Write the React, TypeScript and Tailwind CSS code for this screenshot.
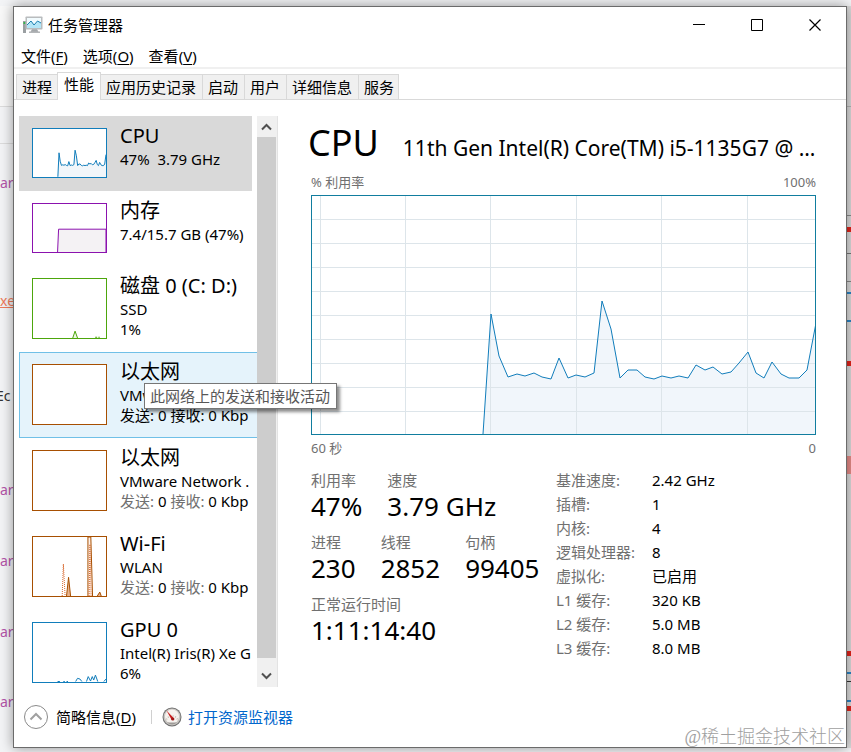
import type { ReactNode } from "react";

const CPU_LINE =
  "172,239 180,119 188,161 197,182 206,179 214,181 223,178 231,182 240,184 248,163 257,183 265,180 274,182 283,178 291,106 300,134 309,183 317,175 326,175 334,182 343,184 351,181 360,183 368,181 377,183 385,170 394,175 402,172 411,179 420,177 428,168 437,157 445,178 453,183 461,167 470,179 478,183 488,183 496,175 505,128";

const TABS = ["进程", "性能", "应用历史记录", "启动", "用户", "详细信息", "服务"];

const MENU = [
  { label: "文件", hotkey: "F" },
  { label: "选项", hotkey: "O" },
  { label: "查看", hotkey: "V" },
];

const SPECS = [
  ["基准速度:", "2.42 GHz"],
  ["插槽:", "1"],
  ["内核:", "4"],
  ["逻辑处理器:", "8"],
  ["虚拟化:", "已启用"],
  ["L1 缓存:", "320 KB"],
  ["L2 缓存:", "5.0 MB"],
  ["L3 缓存:", "8.0 MB"],
];

function TaskManagerIcon() {
  return (
    <svg width="20" height="18" viewBox="0 0 20 18" className="shrink-0">
      <rect x="0" y="5" width="3" height="12" fill="#9a9fa2" />
      <rect x="0.5" y="6" width="2" height="2" fill="#35b44a" />
      <path d="M9 13h5l1.500 3H7.500z" fill="#a3a7aa" />
      <rect x="6" y="15.500" width="11" height="1.500" fill="#b3b6b8" />
      <rect x="2.500" y="0.500" width="17" height="13" rx="0.800" fill="#b9bcbe" />
      <rect x="4" y="2" width="14" height="10" fill="#f2fbfe" />
      <path d="M4 9l4-4 3 4 3.500-4 3.500 2v5H4z" fill="#b4e6f7" />
      <path d="M4 9l4-4 3 4 3.500-4 3.500 2" fill="none" stroke="#1c7fb0" strokeWidth="1" />
    </svg>
  );
}

function GaugeIcon() {
  return (
    <svg width="20" height="20" viewBox="0 0 20 20" className="shrink-0">
      <circle cx="10" cy="10" r="9.500" fill="#6f6f6f" />
      <circle cx="10" cy="10" r="8.500" fill="#c9c6c2" />
      <circle cx="10" cy="9.500" r="7" fill="#f6f2ee" />
      <path d="M4.500 12.500a6 6 0 0 1 11 0" fill="none" stroke="#c4bcb4" strokeWidth="1.500" strokeDasharray="1 1.500" />
      <path d="M4.500 3.500l7.600 8-2.400 1.500z" fill="#c81e1e" />
      <circle cx="10.800" cy="12" r="1.600" fill="#a01818" />
      <path d="M5 15.500h10a8 8 0 0 1-10 0z" fill="#9d9a97" />
    </svg>
  );
}

function Thumb({ className, children }: { className: string; children?: ReactNode }) {
  return (
    <svg
      viewBox="0 0 505 240"
      preserveAspectRatio="none"
      className={`w-[75px] shrink-0 border bg-white ${className}`}
    >
      {children}
    </svg>
  );
}

function Resource({
  name,
  state = "border-transparent",
  short = false,
  thumb,
  children,
}: {
  name: string;
  state?: string;
  short?: boolean;
  thumb: ReactNode;
  children: ReactNode;
}) {
  return (
    <li>
      <button
        className={`flex w-full gap-[13px] overflow-hidden border border-r-0 pt-[6px] pl-3 text-left ${short ? "h-[75px]" : "h-[86px]"} ${state}`}
      >
        <span className="mt-[5px] flex shrink-0">{thumb}</span>
        <span className="block whitespace-nowrap">
          <span className="block text-[20px] leading-[26px]">{name}</span>
          {children}
        </span>
      </button>
    </li>
  );
}

function Traffic({ muted = true }: { muted?: boolean }) {
  const label = muted ? "text-[#707070]" : "";
  return (
    <span className="block leading-5">
      <span className={label}>发送:</span> 0 <span className={label}>接收:</span> 0 Kbp
    </span>
  );
}

function Stat({ label, value }: { label: string; value: string }) {
  return (
    <div>
      <dt className="leading-5 text-[#707070]">{label}</dt>
      <dd className="text-[26px] leading-8">{value}</dd>
    </div>
  );
}

function ResourceList() {
  return (
    <div className="relative flex h-[571px] w-[259px] shrink-0">
      <ul className="min-w-0 flex-1 overflow-hidden">
        <Resource
          name="CPU"
          short
          state="border-[#d9d9d9] bg-[#d9d9d9] w-[233px]!"
          thumb={
            <Thumb className="h-[50px] border-[#117dbb]">
              <polygon points={`${CPU_LINE} 505,240`} fill="#f1f6fa" />
              <polyline points={CPU_LINE} fill="none" stroke="#117dbb" vectorEffect="non-scaling-stroke" />
            </Thumb>
          }
        >
          <span className="block leading-5">47%&nbsp; 3.79 GHz</span>
        </Resource>
        <Resource
          name="内存"
          short
          thumb={
            <Thumb className="h-[50px] border-[#8b12ae]">
              <path d="M170 240L177 126H505V240" fill="#f4f2f4" stroke="#8b12ae" vectorEffect="non-scaling-stroke" />
            </Thumb>
          }
        >
          <span className="block leading-5">7.4/15.7 GB (47%)</span>
        </Resource>
        <Resource
          name="磁盘 0 (C: D:)"
          thumb={
            <Thumb className="h-[61px] border-[#4da60c]">
              <path
                d="M275 240L291 212L308 240M430 237h14M452 237h10"
                fill="#eff7e9"
                stroke="#4da60c"
                vectorEffect="non-scaling-stroke"
              />
            </Thumb>
          }
        >
          <span className="block leading-5">SSD</span>
          <span className="block leading-5">1%</span>
        </Resource>
        <Resource
          name="以太网"
          state="border-[#70c0e7] bg-[#e5f3fb]"
          thumb={<Thumb className="h-[61px] border-[#a74f01]" />}
        >
          <span className="block leading-5">VMware Network .</span>
          <Traffic muted={false} />
        </Resource>
        <Resource name="以太网" thumb={<Thumb className="h-[61px] border-[#a74f01]" />}>
          <span className="block leading-5">VMware Network .</span>
          <Traffic />
        </Resource>
        <Resource
          name="Wi-Fi"
          thumb={
            <Thumb className="h-[61px] border-[#a74f01]">
              <path d="M232 240L246 164L260 240" fill="#e9b48f" stroke="#a74f01" vectorEffect="non-scaling-stroke" />
              <path d="M380 240V0H400L412 240" fill="#fdf1e8" stroke="#a74f01" vectorEffect="non-scaling-stroke" />
              <path d="M445 240L462 224L472 240" fill="#e9b48f" stroke="#a74f01" vectorEffect="non-scaling-stroke" />
              <path
                d="M202 240L210 110L222 240M388 240L394 30L402 240"
                fill="none"
                stroke="#d9692f"
                strokeDasharray="1 1"
                vectorEffect="non-scaling-stroke"
              />
            </Thumb>
          }
        >
          <span className="block leading-5">WLAN</span>
          <Traffic />
        </Resource>
        <Resource
          name="GPU 0"
          thumb={
            <Thumb className="h-[61px] border-[#117dbb]">
              <path
                d="M170 238h16M210 238h10M232 238h10M295 238L308 225L325 228L338 238M370 238L382 218L398 236L410 218L420 232L432 212L448 238M490 238L505 228"
                fill="none"
                stroke="#117dbb"
                vectorEffect="non-scaling-stroke"
              />
            </Thumb>
          }
        >
          <span className="block leading-5">Intel(R) Iris(R) Xe G</span>
          <span className="block leading-5">6%</span>
        </Resource>
      </ul>

      {/* Scrollbar */}
      <div className="flex w-[21px] shrink-0 flex-col border-r border-[#e3e3e3] bg-[#f0f0f0] pr-px">
        <button aria-label="向上滚动" className="flex h-[21px] items-center justify-center">
          <svg width="11" height="8" viewBox="0 0 11 8" fill="none" stroke="#505050" strokeWidth="2">
            <path d="M1 6.500L5.500 2L10 6.500" />
          </svg>
        </button>
        <div className="flex-1 bg-[#cdcdcd]" />
        <button aria-label="向下滚动" className="flex h-[29px] items-center justify-center pt-[7px]">
          <svg width="11" height="8" viewBox="0 0 11 8" fill="none" stroke="#505050" strokeWidth="2">
            <path d="M1 1.500L5.500 6L10 1.500" />
          </svg>
        </button>
      </div>

      <div
        role="tooltip"
        className="absolute top-[267px] left-[125px] border border-[#767676] bg-white pr-[6px] pl-[5px] leading-6 whitespace-nowrap text-[#575757] shadow-[3px_3px_3px_rgba(0,0,0,0.45)]"
      >
        此网络上的发送和接收活动
      </div>
    </div>
  );
}

function CpuChart() {
  return (
    <div className="border border-[#117d9f]">
      <svg viewBox="1 1 503 238" preserveAspectRatio="none" className="block h-[238px] w-full">
        <polygon points={`${CPU_LINE} 505,240`} fill="#f1f6fb" />
        <g stroke="#dde5ea" shapeRendering="crispEdges">
          {[9, 94, 179, 265, 350, 436].map((x) => (
            <line key={x} x1={x + 0.5} x2={x + 0.5} y1="0" y2="240" />
          ))}
          {[24, 48, 72, 96, 120, 144, 168, 192, 216].map((y) => (
            <line key={y} x1="0" x2="505" y1={y + 0.5} y2={y + 0.5} />
          ))}
        </g>
        <polyline points={CPU_LINE} fill="none" stroke="#117dbb" vectorEffect="non-scaling-stroke" />
      </svg>
    </div>
  );
}

function CpuDetails() {
  return (
    <main className="min-w-0 flex-1 pr-[30px] pl-[33px]">
      <div className="flex items-baseline gap-6 pb-[2px]">
        <h1 className="-ml-[3px] text-[36px] leading-[54px]">CPU</h1>
        <p className="min-w-0 flex-1 truncate text-[21px]">11th Gen Intel(R) Core(TM) i5-1135G7 @ 2.40GHz</p>
      </div>
      <div className="flex justify-between text-[13px] leading-5 text-[#707070]">
        <span>% 利用率</span>
        <span>100%</span>
      </div>
      <div className="mt-[3px]">
        <CpuChart />
      </div>
      <div className="mt-[3px] flex justify-between text-[13px] leading-5 text-[#707070]">
        <span>60 秒</span>
        <span>0</span>
      </div>

      <div className="mt-[10px] flex">
        <dl className="flex w-[245px] shrink-0 flex-col gap-[10px] pt-[2px]">
          <div className="flex gap-[25px]">
            <Stat label="利用率" value="47%" />
            <Stat label="速度" value="3.79 GHz" />
          </div>
          <div className="flex gap-[25px]">
            <Stat label="进程" value="230" />
            <Stat label="线程" value="2852" />
            <Stat label="句柄" value="99405" />
          </div>
          <Stat label="正常运行时间" value="1:11:14:40" />
        </dl>
        <table className="self-start text-left">
          <tbody>
            {SPECS.map(([label, value]) => (
              <tr key={label} className="leading-6">
                <th scope="row" className="w-24 p-0 font-normal text-[#707070]">
                  {label}
                </th>
                <td className="p-0">{value}</td>
              </tr>
            ))}
          </tbody>
        </table>
      </div>
    </main>
  );
}

function Window() {
  return (
    <div className="relative z-10 flex min-w-0 flex-1 flex-col border border-[#6b6b6b] bg-white shadow-[0_0_12px_rgba(0,0,0,0.4)]">
      {/* Title bar */}
      <header className="flex h-9 items-center pr-[2px] pl-[9px]">
        <TaskManagerIcon />
        <span className="ml-[5px] flex-1">任务管理器</span>
        <button aria-label="最小化" className="flex h-full w-[58px] items-center justify-center">
          <svg width="12" height="12" viewBox="0 0 12 12" stroke="#000">
            <path d="M0 5.500h12" />
          </svg>
        </button>
        <button aria-label="最大化" className="flex h-full w-[58px] items-center justify-center">
          <svg width="12" height="12" viewBox="0 0 12 12" fill="none" stroke="#000">
            <path d="M.5.5h11v11H.5z" />
          </svg>
        </button>
        <button aria-label="关闭" className="flex h-full w-[58px] items-center justify-center">
          <svg width="12" height="12" viewBox="0 0 12 12" fill="none" stroke="#000" strokeWidth="1.200">
            <path d="M.5.5l11 11M11.500.5l-11 11" />
          </svg>
        </button>
      </header>

      {/* Menu */}
      <nav className="flex h-[26px] items-center gap-[15px] border-b-2 border-[#f0f0f0] pt-[3px] pl-[7px]">
        {MENU.map((m) => (
          <button key={m.label}>
            {m.label}(<u className="underline-offset-2">{m.hotkey}</u>)
          </button>
        ))}
      </nav>

      {/* Tabs */}
      <div role="tablist" className="flex h-[31px] items-end border-b border-[#d9d9d9] pl-[2px]">
        {TABS.map((tab) =>
          tab === "性能" ? (
            <button
              key={tab}
              role="tab"
              aria-selected="true"
              className="-mb-px -ml-px h-7 border border-b-0 border-[#d9d9d9] bg-white px-[6px] pb-1"
            >
              {tab}
            </button>
          ) : (
            <button
              key={tab}
              role="tab"
              aria-selected="false"
              className="h-[25px] border-t border-r border-[#d9d9d9] bg-[#f0f0f0] pr-[6px] pl-[5px] first:border-l first:pr-[5px] last:pr-1"
            >
              {tab}
            </button>
          )
        )}
      </div>

      <div className="flex pt-4 pl-[5px]">
        <ResourceList />
        <CpuDetails />
      </div>

      <footer className="flex h-[60px] items-center pl-[10px]">
        <button className="flex items-center gap-2">
          <svg width="24" height="24" viewBox="0 0 24 24" fill="none">
            <circle cx="12" cy="12" r="11.500" stroke="#8a8a8a" />
            <path d="M6.500 14.500L12 9l5.500 5.500" stroke="#a0a0a0" strokeWidth="2" />
          </svg>
          <span>
            简略信息(<u className="underline-offset-2">D</u>)
          </span>
        </button>
        <span className="mr-[10px] ml-[15px] h-3.5 w-px bg-[#d0d0d0]" />
        <a href="#resmon" className="flex items-center gap-[6px] text-[#0066cc]">
          <GaugeIcon />
          打开资源监视器
        </a>
      </footer>

      <span className="pointer-events-none absolute right-px bottom-0 font-['Liberation_Serif','Noto_Sans_CJK_SC',serif] text-[18px] leading-5 font-light text-[#a0a0a0]">
        @稀土掘金技术社区
      </span>
    </div>
  );
}

export default function App() {
  return (
    <div className="flex min-h-screen overflow-hidden bg-[#f3f4f6] pt-1.5 pb-1 font-['Noto_Sans','Noto_Sans_CJK_SC',sans-serif] text-[15px] text-black">
      {/* Editor showing behind the window */}
      <div className="w-[13px] shrink-0 overflow-hidden text-[14px] leading-5 text-[#b455a8]">
        <div className="h-[101px] border-b border-[#dcdcdc] bg-[#f8f8f8]" />
        <div className="h-[37px] border-b border-[#dcdcdc]" />
        <div className="mt-[29px]">ar</div>
        <div className="mt-[98px] text-[#ee7b5b] underline">xe</div>
        <div className="mt-[75px] -ml-1 text-[#333]">Ec</div>
        <div className="mt-[74px]">ar</div>
        <div className="mt-[51px]">ar</div>
        <div className="mt-[51px]">ar</div>
        <div className="mt-[50px]">ar</div>
      </div>

      <Window />

      <div className="w-1 shrink-0 bg-[#dcdcdc]">
        <div className="h-[101px] border-b border-[#b5b5b5]" />
        <div className="h-[109px] border-b border-[#8c8c8c]" />
        <div className="mt-[11px] h-[5px] bg-[#e3241b]" />
        <div className="h-[22px] border-b border-[#777]" />
        <div className="h-[28px] border-b border-[#888]" />
        <div className="h-3 border-b-2 border-[#2a86c8]" />
        <div className="h-7 border-b-2 border-[#2a86c8]" />
        <div className="mt-[39px] h-[5px] bg-[#e3241b]" />
        <div className="mt-[90px] h-[18px] bg-[#e88c88]" />
        <div className="mt-[177px] h-[5px] bg-[#e3241b]" />
        <div className="mt-[2px] h-4 border-b-2 border-[#2a86c8]" />
        <div className="h-2 border-b border-[#333]" />
        <div className="h-5 border-b-2 border-[#2a86c8]" />
        <div className="mt-1 h-[5px] bg-[#e3241b]" />
      </div>
    </div>
  );
}
